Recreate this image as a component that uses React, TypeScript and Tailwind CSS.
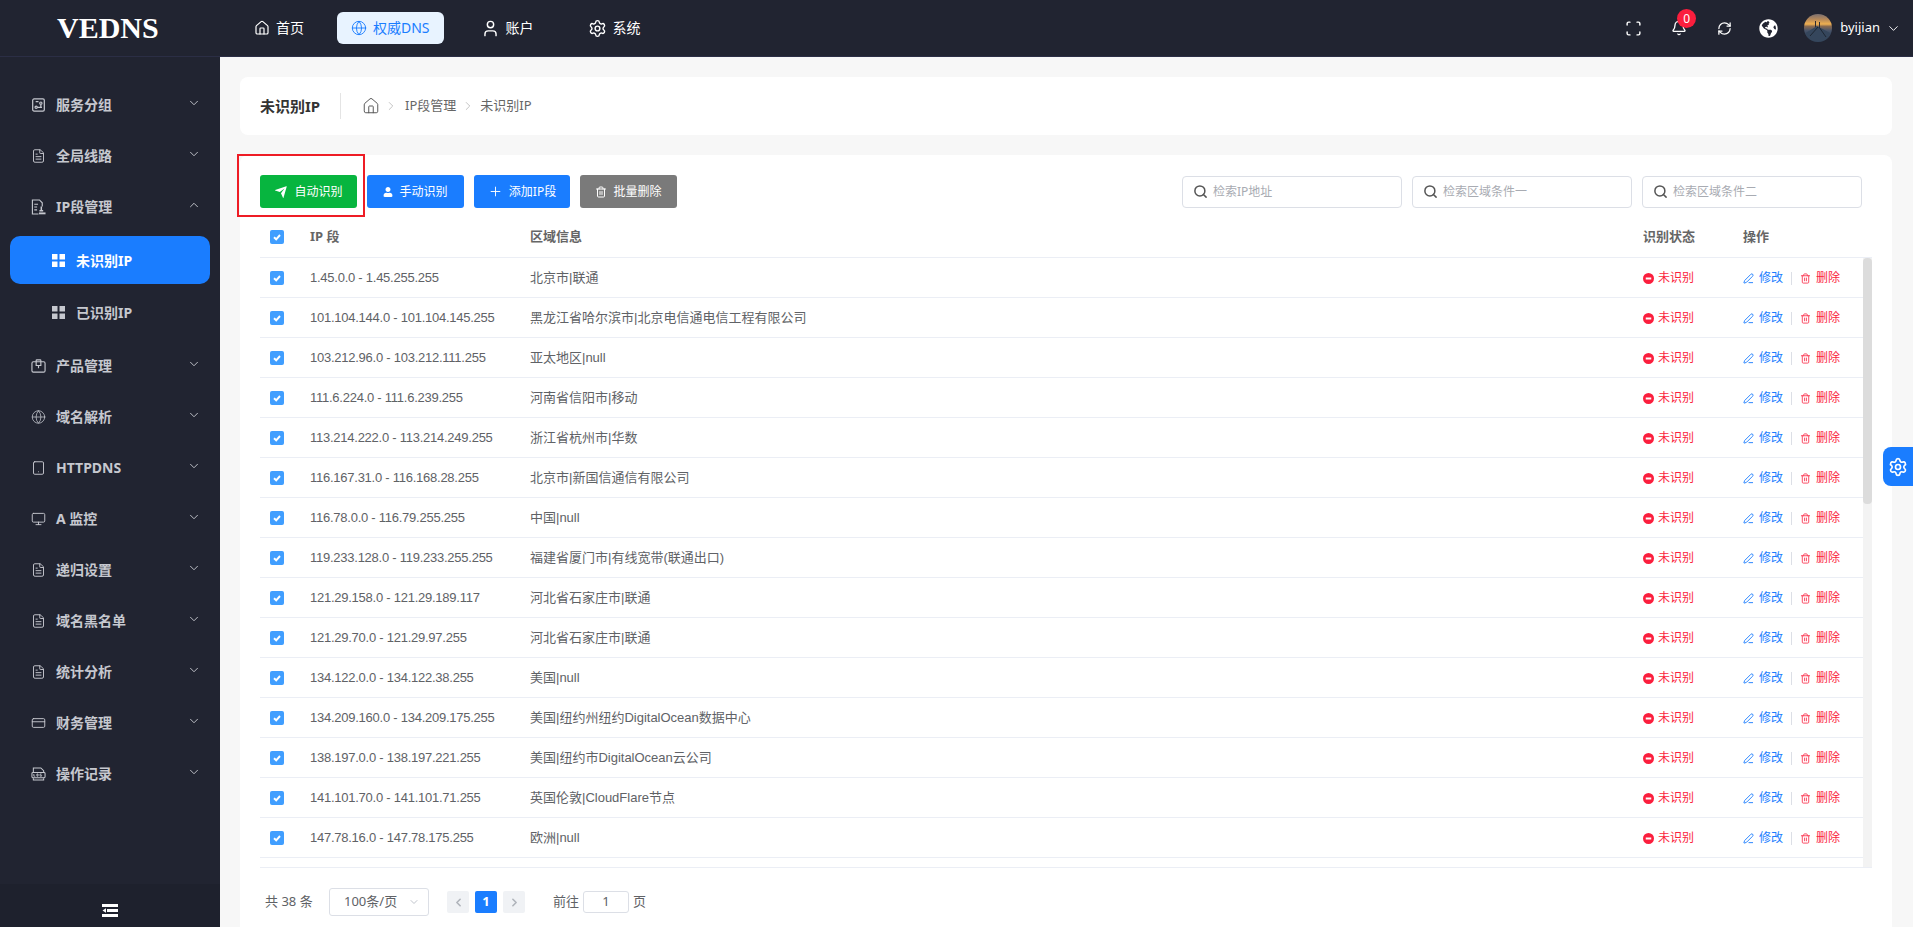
import React from "react";
import { Home, Globe, User, Settings, Bell, RefreshCw, ChevronDown, ChevronUp, ChevronLeft, ChevronRight, Plus, Trash2, PenLine, Search, FileText, Tablet, Monitor, CreditCard, Scan } from "lucide-react";
import { FaUser, FaGlobeAmericas } from "react-icons/fa";
import { RiSendPlaneFill } from "react-icons/ri";

const rows: [string, string][] = [
  ["1.45.0.0 - 1.45.255.255", "北京市|联通"],
  ["101.104.144.0 - 101.104.145.255", "黑龙江省哈尔滨市|北京电信通电信工程有限公司"],
  ["103.212.96.0 - 103.212.111.255", "亚太地区|null"],
  ["111.6.224.0 - 111.6.239.255", "河南省信阳市|移动"],
  ["113.214.222.0 - 113.214.249.255", "浙江省杭州市|华数"],
  ["116.167.31.0 - 116.168.28.255", "北京市|新国信通信有限公司"],
  ["116.78.0.0 - 116.79.255.255", "中国|null"],
  ["119.233.128.0 - 119.233.255.255", "福建省厦门市|有线宽带(联通出口)"],
  ["121.29.158.0 - 121.29.189.117", "河北省石家庄市|联通"],
  ["121.29.70.0 - 121.29.97.255", "河北省石家庄市|联通"],
  ["134.122.0.0 - 134.122.38.255", "美国|null"],
  ["134.209.160.0 - 134.209.175.255", "美国|纽约州纽约DigitalOcean数据中心"],
  ["138.197.0.0 - 138.197.221.255", "美国|纽约市DigitalOcean云公司"],
  ["141.101.70.0 - 141.101.71.255", "英国伦敦|CloudFlare节点"],
  ["147.78.16.0 - 147.78.175.255", "欧洲|null"],
];

function GroupIcon() {
  return (
    <svg viewBox="0 0 16 16" className="w-[16px] h-[16px]" fill="none" stroke="currentColor" strokeWidth="1.3">
      <rect x="1.8" y="1.5" width="12.4" height="13" rx="1.5" />
      <circle cx="10.5" cy="6" r="1.2" />
      <circle cx="5.5" cy="10.5" r="1.2" />
      <path d="M5 4.5h3M6.7 10.5h5M10.5 7.2v3.3" />
    </svg>
  );
}
function IpDocIcon() {
  return (
    <svg viewBox="0 0 16 18" className="w-[16px] h-[18px]" fill="none" stroke="currentColor" strokeWidth="1.2">
      <path d="M8 16.5H1.5V1.5h7.5l3 3v4" />
      <path d="M3.5 6h4M3.5 9h3M3.5 12h3" />
      <path d="M11 8.5v4M9 13h4" strokeWidth="1.6" />
      <path d="M8.5 15.8h7" strokeWidth="2" />
    </svg>
  );
}
function BoxIcon() {
  return (
    <svg viewBox="0 0 16 16" className="w-[16px] h-[16px]" fill="none" stroke="currentColor" strokeWidth="1.2">
      <rect x="1" y="3.5" width="14" height="11" rx="1.5" />
      <path d="M5.5 3.5V2.2c0-.4.3-.7.7-.7h3.6c.4 0 .7.3.7.7v1.3M5.5 3.5v4h5v-4M8 7.5v3" />
    </svg>
  );
}
function LogIcon() {
  return (
    <svg viewBox="0 0 16 16" className="w-[16px] h-[16px]" fill="none" stroke="currentColor" strokeWidth="1.1">
      <path d="M2.5 6V1.5h8l3 3V6M2.5 12.5v2h11v-2" />
      <rect x="1" y="6.5" width="14" height="5.5" rx="1" />
      <path d="M3 8v2.3h1.5M6.3 8h1.2v2.3H6.3zM11.3 8H9.7v2.3h1.6V9.2" strokeWidth="0.9" />
    </svg>
  );
}
function GridIcon() {
  return (
    <svg viewBox="0 0 13 13" className="w-[13px] h-[13px]" fill="currentColor">
      <rect x="0" y="0" width="5.5" height="5.5" />
      <rect x="7.5" y="0" width="5.5" height="5.5" />
      <rect x="0" y="7.5" width="5.5" height="5.5" />
      <rect x="7.5" y="7.5" width="5.5" height="5.5" />
    </svg>
  );
}
function CollapseIcon() {
  return (
    <svg viewBox="0 0 16 13" className="w-[16px] h-[13px]" fill="#fff">
      <rect x="0" y="0" width="16" height="3" />
      <rect x="5" y="5" width="11" height="3" />
      <rect x="0" y="10" width="16" height="3" />
      <path d="M0.5 6.5 4 4.3v4.4z" />
    </svg>
  );
}
function Avatar() {
  return (
    <svg viewBox="0 0 28 28" className="w-[28px] h-[28px] rounded-full">
      <defs>
        <linearGradient id="sky" x1="0" y1="0" x2="0" y2="1">
          <stop offset="0" stopColor="#7a6f70" />
          <stop offset="0.2" stopColor="#b98a58" />
          <stop offset="0.36" stopColor="#f0b050" />
          <stop offset="0.44" stopColor="#8a6a50" />
          <stop offset="0.6" stopColor="#46536a" />
          <stop offset="1" stopColor="#25303f" />
        </linearGradient>
      </defs>
      <rect width="28" height="28" fill="url(#sky)" />
      <path d="M0 20 13 12l15 8v8H0z" fill="#35465c" />
      <path d="M6 22 14 13M22 23 15 13" stroke="#1e2733" strokeWidth="1" />
      <path d="M11 7h1v6h-1zM15 8h1v5h-1z" fill="#2c2a30" />
    </svg>
  );
}

function NavItem({ icon, label, active, className }: { icon: React.ReactNode; label: string; active?: boolean; className?: string }) {
  return (
    <div className={`flex items-center h-[32px] px-[14px] gap-[6px] text-[14px] rounded-[6px] ${active ? "bg-[#e8f3ff] text-[#1a7dff]" : "text-white"} ${className ?? ""}`}>
      {icon}
      <span className="-mt-[1px]">{label}</span>
    </div>
  );
}

function MenuItem({ icon, label, open }: { icon: React.ReactNode; label: string; open?: boolean }) {
  return (
    <div className="flex items-center h-[51px] pl-[31px] pr-[19px] text-[14px] font-bold text-[#c6c8cf]">
      <span className="w-[15px] flex justify-center shrink-0">{icon}</span>
      <span className="ml-[10px] flex-1">{label}</span>
      {open ? <ChevronUp size={14} strokeWidth={1.6} className="-mt-[4px]" /> : <ChevronDown size={14} strokeWidth={1.6} className="-mt-[4px]" />}
    </div>
  );
}

function Check() {
  return (
    <span className="w-[14px] h-[14px] rounded-[2px] bg-[#409eff] flex items-center justify-center shrink-0">
      <svg viewBox="0 0 10 10" className="w-[10px] h-[10px]" fill="none" stroke="#fff" strokeWidth="1.9">
        <path d="M2 5.2 4.2 7.3 8 3" />
      </svg>
    </span>
  );
}

function ToolButton({ icon, label, color, w, className }: { icon: React.ReactNode; label: string; color: string; w: string; className?: string }) {
  return (
    <div className={`flex items-center justify-center h-[33px] rounded-[3px] text-white text-[12px] gap-[6px] ${color} ${w} ${className ?? ""}`}>
      {icon}
      <span>{label}</span>
    </div>
  );
}

function SearchBox({ placeholder }: { placeholder: string }) {
  return (
    <div className="w-[220px] h-[32px] border border-[#dcdfe6] rounded-[4px] flex items-center pl-[10px] gap-[5px] text-[12px] text-[#a8abb2]">
      <Search size={15} strokeWidth={2.4} className="text-[#555]" />
      <span>{placeholder}</span>
    </div>
  );
}

export default function App() {
  return (
    <div className="w-full h-screen overflow-hidden flex flex-col bg-[#f7f7f7] text-[#606266] font-['Noto_Sans','Noto_Sans_CJK_SC',sans-serif]">
      <header className="h-[57px] shrink-0 bg-[#212431] border-b border-[#2b2e45] flex items-center">
        <div className="w-[240px] pl-[57px] font-['Liberation_Serif',serif] font-bold text-[30px] leading-none text-white">VEDNS</div>
        <NavItem icon={<Home size={16} strokeWidth={1.8} />} label="首页" className="gap-[5px]" />
        <NavItem icon={<Globe size={16} strokeWidth={1.4} />} label="权威DNS" active className="ml-[19px]" />
        <NavItem icon={<User size={19} strokeWidth={1.8} />} label="账户" className="ml-[23px]" />
        <NavItem icon={<Settings size={19} strokeWidth={1.8} />} label="系统" className="ml-[26px]" />
        <div className="ml-auto flex items-center text-white pr-[12px]">
          <Scan size={17} strokeWidth={2} />
          <div className="relative ml-[29px]">
            <Bell size={16} />
            <span className="absolute -top-[11px] left-[6px] w-[19px] h-[19px] rounded-full bg-[#fb1e3d] text-[12px] leading-[19px] text-center">0</span>
          </div>
          <RefreshCw size={15} strokeWidth={2} className="ml-[30px]" />
          <FaGlobeAmericas size={19} className="ml-[27px]" />
          <span className="ml-[26px]"><Avatar /></span>
          <span className="ml-[8px] text-[13px] -mt-[1px]">byijian</span>
          <ChevronDown size={15} strokeWidth={1.5} className="ml-[6px]" />
        </div>
      </header>
      <div className="flex-1 flex min-h-0">
        <aside className="w-[220px] shrink-0 bg-[#212431] flex flex-col">
          <nav className="flex-1 pt-[22px]">
            <MenuItem icon={<GroupIcon />} label="服务分组" />
            <MenuItem icon={<FileText size={16} strokeWidth={1.5} />} label="全局线路" />
            <MenuItem icon={<IpDocIcon />} label="IP段管理" open />
            <div className="px-[10px] pt-[4px] pb-[4px] flex flex-col gap-[4px] text-[14px] font-bold">
              <div className="h-[48px] rounded-[10px] bg-[#1a7dff] text-white flex items-center pl-[42px] gap-[11px]">
                <GridIcon />
                <span>未识别IP</span>
              </div>
              <div className="h-[48px] rounded-[10px] text-[#c6c8cf] flex items-center pl-[42px] gap-[11px]">
                <GridIcon />
                <span>已识别IP</span>
              </div>
            </div>
            <MenuItem icon={<BoxIcon />} label="产品管理" />
            <MenuItem icon={<Globe size={16} strokeWidth={1.2} />} label="域名解析" />
            <MenuItem icon={<Tablet size={16} strokeWidth={1.5} />} label="HTTPDNS" />
            <MenuItem icon={<Monitor size={16} strokeWidth={1.5} />} label="A 监控" />
            <MenuItem icon={<FileText size={16} strokeWidth={1.5} />} label="递归设置" />
            <MenuItem icon={<FileText size={16} strokeWidth={1.5} />} label="域名黑名单" />
            <MenuItem icon={<FileText size={16} strokeWidth={1.5} />} label="统计分析" />
            <MenuItem icon={<CreditCard size={16} strokeWidth={1.5} />} label="财务管理" />
            <MenuItem icon={<LogIcon />} label="操作记录" />
          </nav>
          <div className="h-[43px] shrink-0 bg-[#1e212d] flex items-center justify-center pt-[9px]">
            <CollapseIcon />
          </div>
        </aside>
        <main className="relative flex-1 min-w-0 flex flex-col pt-[20px] pl-[20px] pr-[21px]">
          <section className="h-[58px] shrink-0 bg-white rounded-[8px] flex items-center pl-[20px] text-[13px] text-[#666]">
            <span className="w-[60px] text-[15px] font-bold text-[#333] whitespace-nowrap">未识别IP</span>
            <span className="ml-[20px] w-px h-[26px] bg-[#e4e4e4]" />
            <Home size={18} strokeWidth={1.3} className="ml-[21px] text-[#555]" />
            <ChevronRight size={14} strokeWidth={1.2} className="ml-[4px] text-[#aaa]" />
            <span className="ml-[7px]">IP段管理</span>
            <ChevronRight size={14} strokeWidth={1.2} className="ml-[5px] text-[#aaa]" />
            <span className="ml-[5px]">未识别IP</span>
          </section>
          <section className="mt-[20px] flex-1 min-h-0 bg-white rounded-t-[8px] px-[20px] pt-[20px] flex flex-col">
            <div className="flex items-center">
              <div className="relative">
                <ToolButton icon={<RiSendPlaneFill size={14} />} label="自动识别" color="bg-[#07b53f]" w="w-[97px]" />
                <span className="absolute -left-[23px] -top-[21px] -right-[8px] -bottom-[9px] border-2 border-[#ee1c25]" />
              </div>
              <ToolButton icon={<FaUser size={10} />} label="手动识别" color="bg-[#1a7dff]" w="w-[97px]" className="ml-[10px]" />
              <ToolButton icon={<Plus size={15} strokeWidth={1.5} />} label="添加IP段" color="bg-[#1a7dff]" w="w-[96px]" className="ml-[10px]" />
              <ToolButton icon={<Trash2 size={12} />} label="批量删除" color="bg-[#7a7a7a]" w="w-[97px]" className="ml-[10px]" />
              <div className="ml-auto flex gap-[10px] pr-[10px]">
                <SearchBox placeholder="检索IP地址" />
                <SearchBox placeholder="检索区域条件一" />
                <SearchBox placeholder="检索区域条件二" />
              </div>
            </div>
            <div className="mt-[9px] h-[41px] shrink-0 grid grid-cols-[50px_220px_1fr_100px_129px] items-center border-b border-[#ebeef5] text-[13px] font-bold text-[#666]">
              <span className="pl-[10px]"><Check /></span>
              <span>IP 段</span>
              <span>区域信息</span>
              <span>识别状态</span>
              <span>操作</span>
            </div>
            <div className="h-[610px] shrink-0 flex border-b border-[#ebeef5]">
              <div className="flex-1 min-w-0">
                {rows.map(([ip, region]) => (
                  <div key={ip} className="h-[40px] grid grid-cols-[50px_220px_1fr_100px_120px] items-center border-b border-[#ebeef5] text-[13px] font-['Liberation_Sans','Noto_Sans_CJK_SC',sans-serif]">
                    <span className="pl-[10px]"><Check /></span>
                    <span className="tracking-[-0.25px] pt-[1px]">{ip}</span>
                    <span className="pt-[1px]">{region}</span>
                    <span className="flex items-center gap-[4px] text-[12px] text-[#fb1e3d] pt-[1px]">
                      <svg viewBox="0 0 12 12" className="w-[11px] h-[11px]" fill="#fb1e3d">
                        <path fillRule="evenodd" d="M6 0a6 6 0 1 1 0 12A6 6 0 0 1 6 0zM3 5v2h6V5z" />
                      </svg>
                      未识别
                    </span>
                    <span className="flex items-center text-[12px] pt-[1px]">
                      <PenLine size={11} className="text-[#1a7dff]" />
                      <span className="ml-[5px] text-[#1a7dff]">修改</span>
                      <span className="mx-[8px] w-px h-[13px] bg-[#dcdfe6]" />
                      <Trash2 size={11} className="text-[#fb3d58]" />
                      <span className="ml-[5px] text-[#fb1e3d]">删除</span>
                    </span>
                  </div>
                ))}
              </div>
              <div className="w-[9px] shrink-0 bg-[#f3f3f3]">
                <div className="h-[246px] rounded-[4px] bg-[#dcdcdc]" />
              </div>
            </div>
            <div className="mt-[20px] flex items-center text-[13px]">
              <span className="ml-[5px] w-[50px] whitespace-nowrap">共 38 条</span>
              <div className="ml-[14px] w-[100px] h-[28px] border border-[#dcdfe6] rounded-[3px] flex items-center pl-[14px] pr-[8px]">
                <span className="flex-1">100条/页</span>
                <ChevronDown size={12} className="text-[#c0c4cc]" />
              </div>
              <span className="ml-[18px] w-[22px] h-[22px] bg-[#f0f2f5] rounded-[2px] flex items-center justify-center text-[#b0b4bb]"><ChevronLeft size={13} strokeWidth={3} /></span>
              <span className="ml-[6px] w-[22px] h-[22px] bg-[#1a7dff] rounded-[2px] flex items-center justify-center text-white font-bold">1</span>
              <span className="ml-[6px] w-[22px] h-[22px] bg-[#f0f2f5] rounded-[2px] flex items-center justify-center text-[#b0b4bb]"><ChevronRight size={13} strokeWidth={3} /></span>
              <span className="ml-[28px]">前往</span>
              <span className="ml-[4px] w-[46px] h-[22px] border border-[#dcdfe6] rounded-[3px] flex items-center justify-center">1</span>
              <span className="ml-[4px]">页</span>
            </div>
          </section>
          <div className="absolute right-0 top-[390px] w-[30px] h-[39px] bg-[#1a7dff] rounded-l-[8px] flex items-center justify-center text-white">
            <Settings size={20} />
          </div>
        </main>
      </div>
    </div>
  );
}
